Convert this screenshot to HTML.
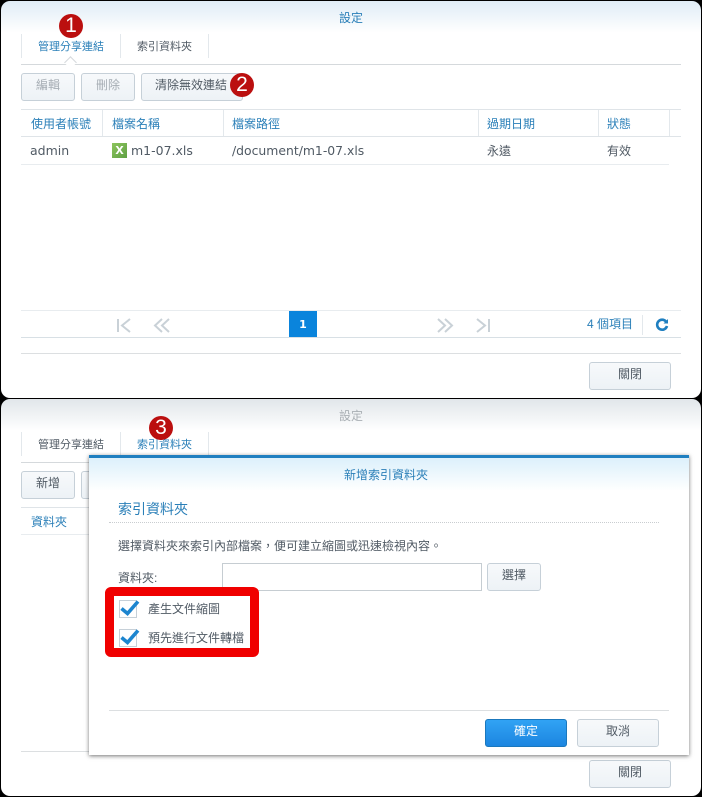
<!DOCTYPE html>
<html lang="zh-Hant"><head><meta charset="utf-8"><title>設定</title>
<style>
*{box-sizing:border-box}
html,body{margin:0;padding:0;width:702px;height:797px;background:#000;overflow:hidden}
body{position:relative;font-family:"Liberation Sans","Noto Sans CJK TC",sans-serif;font-size:12px;color:#505a64}
.a,.t,.l,.b,.v{position:absolute}
.win{position:absolute;left:1px;width:700px;background:#fff;border-radius:9px;overflow:hidden}
.t{white-space:nowrap;line-height:16px;height:16px}
.bl{color:#2a7fb8}
.l{height:1px;background:#dfe4e8}
.v{width:1px;background:#e3e8ec}
.b{border:1px solid #c6d0d8;border-radius:3px;background:linear-gradient(#f7f9fb,#edf2f6);text-align:center;height:28px;line-height:22px;color:#505a64}
.dis{color:#a6adb4}
.n{width:24px;height:24px;border-radius:50%;background:#bb0f0f;color:#fff;font:normal 21px/24px "Liberation Sans",sans-serif;text-align:center;position:absolute}
.chk{position:absolute;width:18px;height:18px;border:1px solid #c6d0d8;background:#fff}
.lat{font-family:"DejaVu Sans","Noto Sans CJK TC",sans-serif}
</style></head><body>

<!-- window 1 -->
<div class="win" style="top:1px;height:397px;background:linear-gradient(#dfecf6 0,#fff 32px)"></div>
<div class="t bl" style="left:339px;top:10px">設定</div>
<div class="v" style="left:21px;top:34px;height:24px"></div>
<div class="v" style="left:120px;top:34px;height:24px"></div>
<div class="v" style="left:208px;top:34px;height:24px"></div>
<div class="t bl" style="left:38px;top:39px;font-size:11px">管理分享連結</div>
<div class="t" style="left:137px;top:39px;font-size:11px">索引資料夾</div>
<div class="l" style="left:21px;top:64px;width:660px;background:#d5d9dc"></div>
<div class="a" style="left:66px;top:58px;width:9px;height:9px;background:#fff;border-left:1px solid #d5d9dc;border-top:1px solid #d5d9dc;transform:rotate(45deg)"></div>
<div class="b dis" style="left:21px;top:73px;width:54px">編輯</div>
<div class="b dis" style="left:81px;top:73px;width:54px">刪除</div>
<div class="b" style="left:141px;top:73px;width:102px;padding-right:2px">清除無效連結</div>

<div class="l" style="left:21px;top:109px;width:660px"></div>
<div class="l" style="left:21px;top:136px;width:660px"></div>
<div class="l" style="left:21px;top:164px;width:648px;background:#e8ecef"></div>
<div class="v" style="left:102px;top:110px;height:26px"></div>
<div class="v" style="left:223px;top:110px;height:26px"></div>
<div class="v" style="left:478px;top:110px;height:26px"></div>
<div class="v" style="left:598px;top:110px;height:26px"></div>
<div class="v" style="left:669px;top:110px;height:26px"></div>
<div class="t bl" style="left:31px;top:116px">使用者帳號</div>
<div class="t bl" style="left:112px;top:116px">檔案名稱</div>
<div class="t bl" style="left:232px;top:116px">檔案路徑</div>
<div class="t bl" style="left:487px;top:116px">過期日期</div>
<div class="t bl" style="left:607px;top:116px">狀態</div>
<div class="t lat" style="left:30px;top:143px;font-size:12.5px">admin</div>
<div class="a" style="left:112px;top:143px;width:15px;height:15px;background:linear-gradient(135deg,#8cc45c,#5fa044);color:#fff;font:bold 15px/14px 'Liberation Sans',sans-serif;text-align:center">x</div>
<div class="t lat" style="left:131px;top:143px;font-size:12.5px">m1-07.xls</div>
<div class="t lat" style="left:232px;top:143px;font-size:12.4px">/document/m1-07.xls</div>
<div class="t" style="left:487px;top:143px">永遠</div>
<div class="t" style="left:607px;top:143px">有效</div>

<div class="l" style="left:21px;top:310px;width:660px;background:#e8ecef"></div>
<div class="l" style="left:21px;top:337px;width:660px;background:#d8e0e5"></div>
<div class="a" style="left:289px;top:311px;width:28px;height:26px;background:#0a84dc;color:#fff;text-align:center;font:bold 11px/28px 'DejaVu Sans',sans-serif">1</div>
<svg class="a" style="left:110px;top:312px" width="70" height="26" fill="none" stroke="#c9d1d7" stroke-width="2"><path d="M8 7v13M20 7l-8 6.500 8 6.500M52 7l-7 6.500 7 6.500M59 7l-7 6.500 7 6.500"/></svg>
<svg class="a" style="left:430px;top:312px" width="70" height="26" fill="none" stroke="#c9d1d7" stroke-width="2"><path d="M8 7l7 6.500-7 6.500M15 7l7 6.500-7 6.500M47 7l8 6.500-8 6.500M59 7v13"/></svg>
<div class="t bl" style="left:587px;top:316px">4 個項目</div>
<div class="v" style="left:642px;top:315px;height:20px"></div>
<svg class="a" style="left:655px;top:318px" width="14" height="14" fill="none"><path d="M11 3.500A5 5 0 1 0 12 8" stroke="#1f7fc0" stroke-width="2.600"/><path d="M8.500 5.500h4.500v-4.500z" fill="#1f7fc0"/></svg>
<div class="l" style="left:21px;top:353px;width:660px;background:#dcdfe1"></div>
<div class="b" style="left:589px;top:362px;width:82px">關閉</div>

<div class="n" style="left:59px;top:14px">1</div>
<div class="n" style="left:230px;top:73px">2</div>

<!-- window 2 -->
<div class="win" style="top:399px;height:397px;background:linear-gradient(#e1e6ea 0,#fff 32px)"></div>
<div class="t" style="left:339px;top:408px;color:#a9afb4">設定</div>
<div class="v" style="left:21px;top:432px;height:24px"></div>
<div class="v" style="left:120px;top:432px;height:24px"></div>
<div class="v" style="left:208px;top:432px;height:24px"></div>
<div class="t" style="left:38px;top:437px;font-size:11px">管理分享連結</div>
<div class="t bl" style="left:137px;top:437px;font-size:11px">索引資料夾</div>
<div class="l" style="left:21px;top:462px;width:68px;background:#d5d9dc"></div>
<div class="b" style="left:21px;top:471px;width:54px">新增</div>
<div class="b" style="left:81px;top:471px;width:54px"></div>
<div class="l" style="left:21px;top:507px;width:68px"></div>
<div class="t bl" style="left:31px;top:514px">資料夾</div>
<div class="l" style="left:21px;top:534px;width:68px;background:#e8ecef"></div>
<div class="l" style="left:21px;top:751px;width:68px;background:#dcdfe1"></div>
<div class="b" style="left:589px;top:760px;width:82px">關閉</div>
<div class="n" style="left:149px;top:416px">3</div>

<!-- dialog -->
<div class="a" style="left:89px;top:455px;width:600px;height:300px;background:linear-gradient(#dcf0fb 0,#fff 33px);border-top:3px solid #1f7fc0;box-shadow:0 1px 4px rgba(0,0,0,.55)"></div>
<div class="t bl" style="left:344px;top:467px">新增索引資料夾</div>
<div class="t bl" style="left:118px;top:500px;font-size:14px;height:18px;line-height:18px">索引資料夾</div>
<div class="a" style="left:109px;top:522px;width:550px;border-top:1px dotted #c9cdd0"></div>
<div class="t" style="left:118px;top:538px">選擇資料夾來索引內部檔案，便可建立縮圖或迅速檢視內容。</div>
<div class="t" style="left:118px;top:570px">資料夾:</div>
<div class="a" style="left:222px;top:563px;width:260px;height:28px;border:1px solid #c6cdd2;background:#fff"></div>
<div class="b" style="left:487px;top:563px;width:54px">選擇</div>

<div class="a" style="left:105px;top:587px;width:154px;height:70px;border:9px solid #f00000;border-radius:6px;background:#fff"></div>
<div class="chk" style="left:119px;top:600px"></div>
<div class="chk" style="left:119px;top:629px"></div>
<svg class="a" style="left:120px;top:599px" width="20" height="20" fill="none"><path d="M1.500 9.500l6 5L18 2.500" stroke="#1c85cf" stroke-width="3.600"/></svg>
<svg class="a" style="left:120px;top:628px" width="20" height="20" fill="none"><path d="M1.500 9.500l6 5L18 2.500" stroke="#1c85cf" stroke-width="3.600"/></svg>
<div class="t" style="left:148px;top:601px">產生文件縮圖</div>
<div class="t" style="left:148px;top:630px">預先進行文件轉檔</div>

<div class="l" style="left:109px;top:710px;width:560px;background:#dcdfe1"></div>
<div class="b" style="left:485px;top:719px;width:82px;background:linear-gradient(#31a3f4,#1c85e0);border-color:#1b78bd;color:#fff">確定</div>
<div class="b" style="left:577px;top:719px;width:82px">取消</div>

</body></html>
